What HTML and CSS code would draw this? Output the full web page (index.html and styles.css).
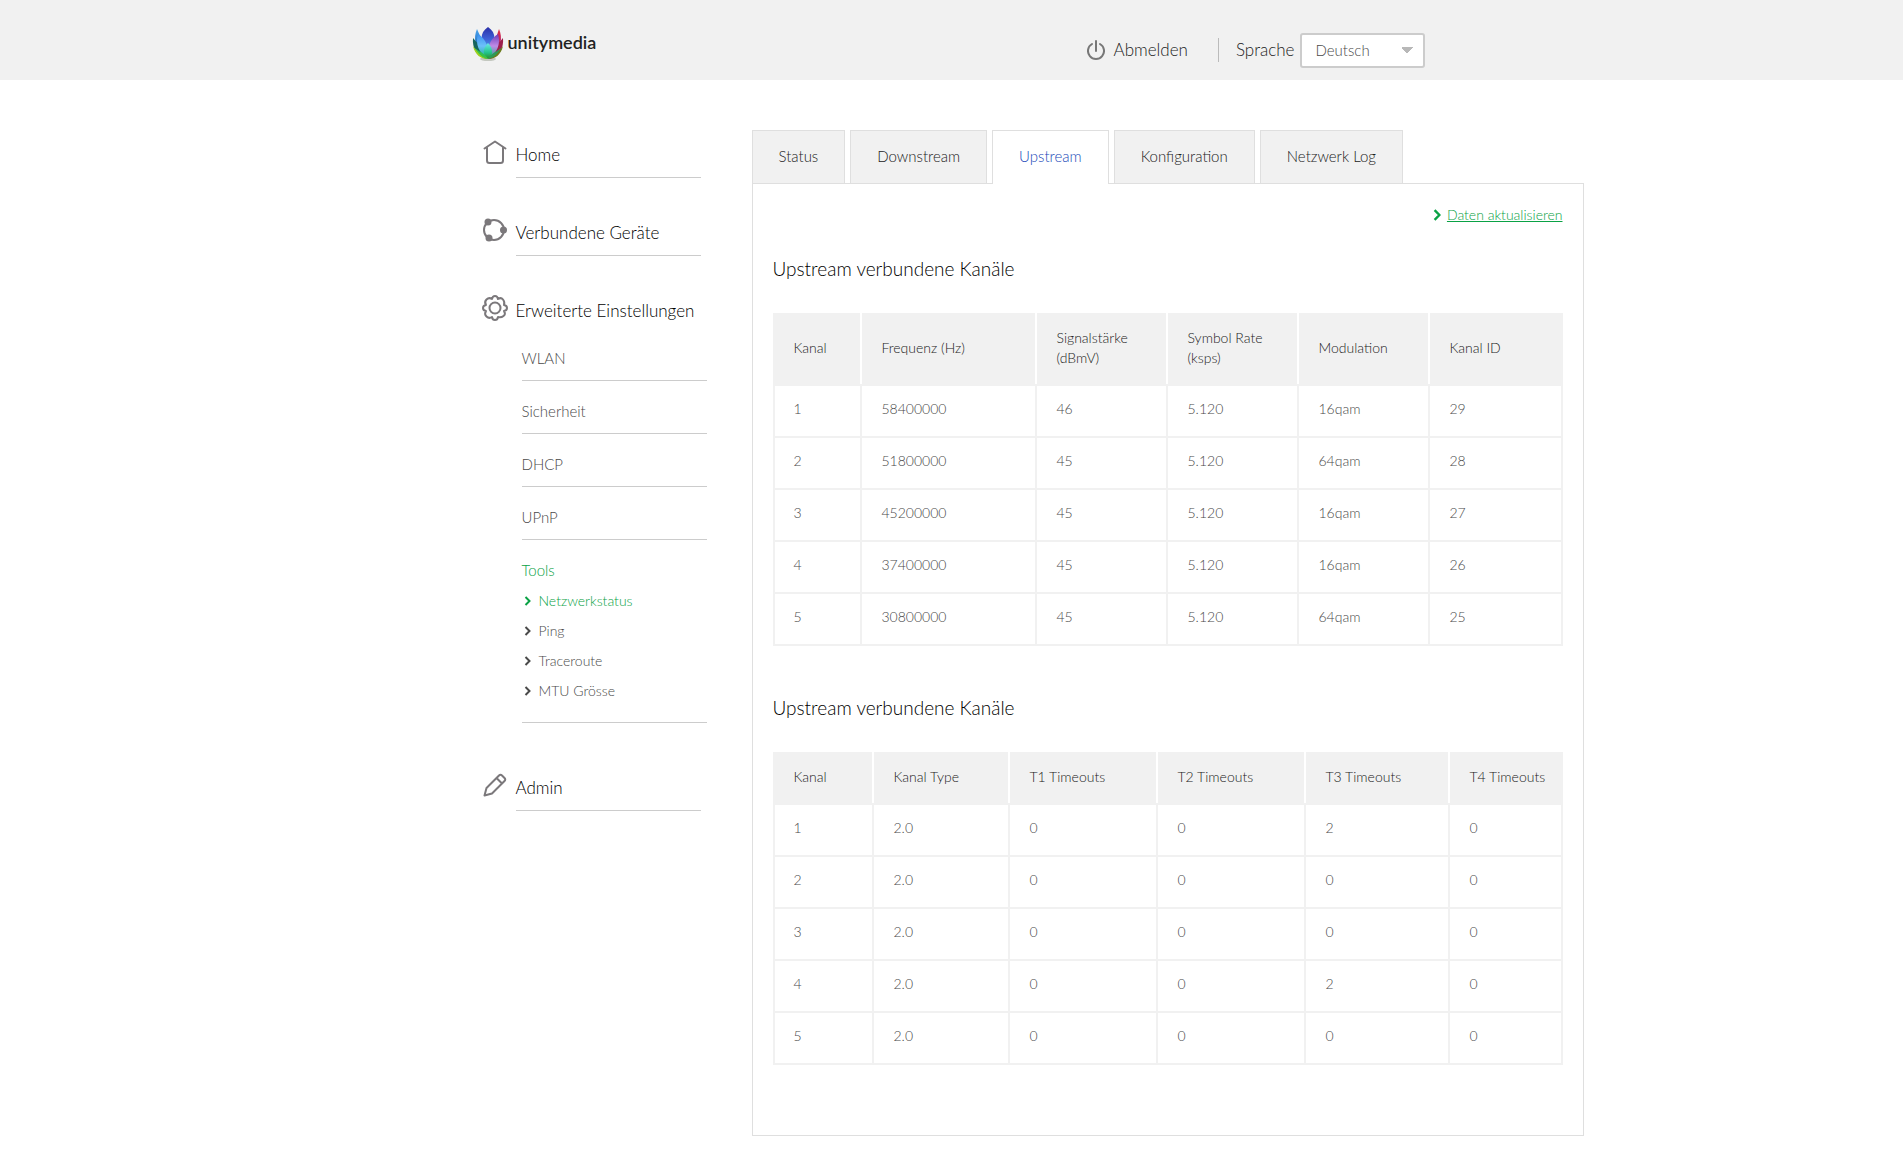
FILE: index.html
```
<!DOCTYPE html>
<html lang="de">
<head>
  <meta charset="UTF-8" />
  <meta name="viewport" content="width=device-width, initial-scale=1.0"/>
  <title>Netzwerkstatus - Upstream</title>
  <link rel="stylesheet" href="styles.css">
</head>
<body>

  <header class="header">
    <div class="container header-inner">
      <a class="logo" href="#">
        <svg class="logo-mark" width="32" height="36" viewBox="0 0 32 36" aria-hidden="true">
          <defs>
            <linearGradient id="petalTop" x1="0" y1="0" x2="0" y2="1">
              <stop offset="0" stop-color="#2a2fa8"/><stop offset=".5" stop-color="#3f62d8"/><stop offset="1" stop-color="#4fc0ee"/>
            </linearGradient>
            <linearGradient id="petalLeft" x1="0" y1="0" x2="0" y2="1">
              <stop offset="0" stop-color="#3b8ff0"/><stop offset=".5" stop-color="#6cc0fa"/><stop offset="1" stop-color="#12b48c"/>
            </linearGradient>
            <linearGradient id="petalRight" x1="0" y1="0" x2="0" y2="1">
              <stop offset="0" stop-color="#6a3ab8"/><stop offset=".5" stop-color="#c08be6"/><stop offset="1" stop-color="#2aa58c"/>
            </linearGradient>
            <linearGradient id="petalBlue" x1="0" y1="0" x2="0" y2="1">
              <stop offset="0" stop-color="#4ba6ee"/><stop offset=".5" stop-color="#2a78c8"/><stop offset="1" stop-color="#176a50"/>
            </linearGradient>
            <linearGradient id="petalRed" x1="0" y1="0" x2="0" y2="1">
              <stop offset="0" stop-color="#e0303c"/><stop offset=".5" stop-color="#b8266e"/><stop offset="1" stop-color="#4a3a3a"/>
            </linearGradient>
            <linearGradient id="petalBase" x1="0" y1="0" x2="0" y2="1">
              <stop offset="0" stop-color="#6fe8ec"/><stop offset=".6" stop-color="#22c48a"/><stop offset="1" stop-color="#2c8a22"/>
            </linearGradient>
          </defs>
          <ellipse cx="16" cy="33" rx="8" ry="2" fill="#c4c8c0"/>
          <path d="M5 3C1 12 3 22 11 29L9 12Z" fill="url(#petalBlue)"/>
          <path d="M27 3C31 12 29 22 21 29L24 12Z" fill="url(#petalRed)"/>
          <path d="M1 12C0 22 5 31 15 33L8 20Z" fill="#17655e"/>
          <path d="M31 12C32 22 27 31 17 33L25 19Z" fill="#9c1f4c"/>
          <path d="M1 20C3 29 9 33 16 33C12 29 6 27 1 20Z" fill="#9ccf1f"/>
          <path d="M31 20C29 29 23 33 16 33C20 29 26 27 31 20Z" fill="#6b7d1c"/>
          <path d="M16 1C7 7 8 16 16 26C24 16 25 7 16 1Z" fill="url(#petalTop)"/>
          <path d="M6 8C3 18 7 27 15 32C18 22 14 13 6 8Z" fill="url(#petalLeft)"/>
          <path d="M26 8C29 18 25 27 17 32C14 22 18 13 26 8Z" fill="url(#petalRight)"/>
          <path d="M16 17C10 23 11 30 16 33C21 30 22 23 16 17Z" fill="url(#petalBase)"/>
          <path d="M3 22C7 29 11 32 16 33C14 28 9 27 3 22Z" fill="#35c24a"/>
          <path d="M29 22C25 29 21 32 16 33C18 28 23 27 29 22Z" fill="#2d9a58"/>
        </svg>
        <span class="logo-text">unitymedia</span>
      </a>

      <div class="header-tools">
        <a class="logout" href="#">
          <svg width="18" height="20" viewBox="0 0 18 20" fill="none" stroke="#777" stroke-width="2" stroke-linecap="round" aria-hidden="true">
            <path d="M5 4A8 8 0 1 0 13 4M9 1V11"/>
          </svg>
          Abmelden
        </a>
        <div class="language">
          <label for="language">Sprache</label>
          <select id="language">
            <option>Deutsch</option>
            <option>English</option>
          </select>
        </div>
      </div>
    </div>
  </header>

  <div class="container layout">
    <nav class="sidebar">
      <ul class="menu">
        <li class="menu-item">
          <svg class="menu-icon" viewBox="0 0 26 26" fill="none" stroke="#7b787b" stroke-width="2" stroke-linecap="round" stroke-linejoin="round" aria-hidden="true">
            <path d="M2.500 9.500L13 2.500L23.500 9.500M5 8.500V21.500Q5 24 7.500 24H18.500Q21 24 21 21.500V8.500"/>
          </svg>
          <a class="menu-link" href="#">Home</a>
        </li>
        <li class="menu-item">
          <svg class="menu-icon" viewBox="0 0 26 26" fill="none" stroke="#7b787b" stroke-width="2" aria-hidden="true">
            <circle cx="12" cy="13" r="10"/>
            <g fill="#7b787b" stroke="none">
              <circle cx="6" cy="5" r="3.500"/><circle cx="21.500" cy="13" r="3.500"/><circle cx="7" cy="21" r="3.500"/>
            </g>
          </svg>
          <a class="menu-link" href="#">Verbundene Geräte</a>
        </li>
        <li class="menu-item menu-item-open">
          <svg class="menu-icon" viewBox="0 0 26 26" fill="none" stroke="#7b787b" stroke-width="2" stroke-linejoin="round" aria-hidden="true">
            <path d="M10 4Q10.500 1 13 1T16 4Q19 2 21 4.500T22 10Q25 10.500 25 13T22 16Q24 19 21.500 21T16 22Q15.500 25 13 25T10 22Q7 24 4.500 21.500T4 16Q1 15.500 1 13T4 10Q2 7 4.500 4.500T10 4Z"/>
            <circle cx="13" cy="13" r="5.500"/>
          </svg>
          <a class="menu-link" href="#">Erweiterte Einstellungen</a>
        </li>
      </ul>

      <ul class="submenu">
        <li><a href="#">WLAN</a></li>
        <li><a href="#">Sicherheit</a></li>
        <li><a href="#">DHCP</a></li>
        <li><a href="#">UPnP</a></li>
        <li class="submenu-open">
          <a class="active" href="#">Tools</a>
          <ul class="tools">
            <li class="active"><svg class="chevron" viewBox="0 0 6 10"><path d="M1 1L5 5L1 9"/></svg><a href="#">Netzwerkstatus</a></li>
            <li><svg class="chevron" viewBox="0 0 6 10"><path d="M1 1L5 5L1 9"/></svg><a href="#">Ping</a></li>
            <li><svg class="chevron" viewBox="0 0 6 10"><path d="M1 1L5 5L1 9"/></svg><a href="#">Traceroute</a></li>
            <li><svg class="chevron" viewBox="0 0 6 10"><path d="M1 1L5 5L1 9"/></svg><a href="#">MTU Grösse</a></li>
          </ul>
        </li>
      </ul>

      <ul class="menu">
        <li class="menu-item">
          <svg class="menu-icon" viewBox="0 0 26 26" fill="none" stroke="#7b787b" stroke-width="2" stroke-linejoin="round" aria-hidden="true">
            <path d="M2.500 23.500L4.500 16L17 3.500Q18.500 2 20 3.500L22.500 6Q24 7.500 22.500 9L10 21.500ZM14.500 6L20 11.500"/>
          </svg>
          <a class="menu-link" href="#">Admin</a>
        </li>
      </ul>
    </nav>

    <main class="content">
      <div class="tabs">
        <a class="tab" href="#">Status</a>
        <a class="tab" href="#">Downstream</a>
        <a class="tab tab-active" href="#">Upstream</a>
        <a class="tab" href="#">Konfiguration</a>
        <a class="tab" href="#">Netzwerk Log</a>
      </div>

      <div class="panel">
        <div class="refresh">
          <svg class="chevron chevron-large" viewBox="0 0 6 10"><path d="M1 1L5 5L1 9"/></svg>
          <a href="#">Daten aktualisieren</a>
        </div>

        <h2>Upstream verbundene Kanäle</h2>
        <table class="channels channels-signal">
          <colgroup><col><col><col><col><col><col></colgroup>
          <thead>
            <tr><th>Kanal</th><th>Frequenz (Hz)</th><th>Signalstärke<br>(dBmV)</th><th>Symbol Rate<br>(ksps)</th><th>Modulation</th><th>Kanal ID</th></tr>
          </thead>
          <tbody>
            <tr><td>1</td><td>58400000</td><td>46</td><td>5.120</td><td>16qam</td><td>29</td></tr>
            <tr><td>2</td><td>51800000</td><td>45</td><td>5.120</td><td>64qam</td><td>28</td></tr>
            <tr><td>3</td><td>45200000</td><td>45</td><td>5.120</td><td>16qam</td><td>27</td></tr>
            <tr><td>4</td><td>37400000</td><td>45</td><td>5.120</td><td>16qam</td><td>26</td></tr>
            <tr><td>5</td><td>30800000</td><td>45</td><td>5.120</td><td>64qam</td><td>25</td></tr>
          </tbody>
        </table>

        <h2>Upstream verbundene Kanäle</h2>
        <table class="channels channels-timeouts">
          <colgroup><col><col><col><col><col><col></colgroup>
          <thead>
            <tr><th>Kanal</th><th>Kanal Type</th><th>T1 Timeouts</th><th>T2 Timeouts</th><th>T3 Timeouts</th><th>T4 Timeouts</th></tr>
          </thead>
          <tbody>
            <tr><td>1</td><td>2.0</td><td>0</td><td>0</td><td>2</td><td>0</td></tr>
            <tr><td>2</td><td>2.0</td><td>0</td><td>0</td><td>0</td><td>0</td></tr>
            <tr><td>3</td><td>2.0</td><td>0</td><td>0</td><td>0</td><td>0</td></tr>
            <tr><td>4</td><td>2.0</td><td>0</td><td>0</td><td>2</td><td>0</td></tr>
            <tr><td>5</td><td>2.0</td><td>0</td><td>0</td><td>0</td><td>0</td></tr>
          </tbody>
        </table>
      </div>
    </main>
  </div>

</body>
</html>
```
FILE: styles.css
```
:root {
  --grey-bg: #f1f1f1;
  --line: #ccc;
  --panel-line: #dfdfdf;
  --text: #000;
  --text-soft: #4a4a4a;
  --green: #0aa245;
}

* {
  box-sizing: border-box;
}

body {
  margin: 0;
  font-family: Lato, "Open Sans", sans-serif;
  font-weight: 300;
  font-size: 15px;
  line-height: 20px;
  color: var(--text);
  background: #fff;
}

a {
  color: inherit;
  text-decoration: none;
}

ul {
  list-style: none;
  margin: 0;
  padding: 0;
}

.container {
  max-width: 960px;
  margin: 0 auto;
}

/* header */
.header {
  background: var(--grey-bg);
}

.header-inner {
  display: flex;
  justify-content: space-between;
  align-items: center;
  height: 80px;
  padding-right: 7px;
}

.logo {
  display: flex;
  align-items: center;
  gap: 4px;
  padding-top: 8px;
}

.logo-text {
  padding-bottom: 4px;
  font-size: 18px;
  font-weight: 600;
  color: #222;
}

.header-tools {
  display: flex;
  align-items: center;
  padding-top: 20px;
  font-size: 17px;
  line-height: 24px;
  color: #222;
}

.logout {
  display: flex;
  align-items: center;
  gap: 9px;
  padding-right: 30px;
  border-right: 1px solid #bbb;
}

.language {
  display: flex;
  align-items: center;
  gap: 5px;
  padding-left: 17px;
}

.language select {
  appearance: none;
  width: 125px;
  height: 35px;
  padding: 0 14px;
  border: 2px solid #ccc;
  border-radius: 3px;
  font: inherit;
  font-size: 15px;
  color: var(--text-soft);
  background: conic-gradient(from 315deg at 50% 100%, #b8b8b8 90deg, #fff 0) right 11px center / 12px 6px no-repeat #fff;
  background: conic-gradient(from 315deg at 50% 100%, #b8b8b8 90deg, #fff 0) right 10px center / 12px 6px no-repeat #fff;
}

/* page layout */
.layout {
  display: grid;
  grid-template-columns: 280px 832px;
  padding: 50px 0 30px;
}

/* sidebar */
.sidebar {
  padding: 8px 0 0 10px;
}

.menu-item {
  display: flex;
  gap: 8px;
  margin-bottom: 38px;
}

.menu-icon {
  flex: none;
  width: 26px;
  height: 26px;
  margin-top: 1px;
}

.menu-link {
  width: 185px;
  padding: 5px 0 10px;
  border-bottom: 1px solid var(--line);
  font-size: 17px;
  line-height: 24px;
  white-space: nowrap;
}

.menu-item-open {
  margin-bottom: 0;
}

.menu-item-open .menu-link {
  padding-bottom: 5px;
  border: none;
}

.submenu {
  width: 185px;
  margin: 0 0 48px 40px;
}

.submenu > li {
  padding: 14px 0 6px;
  border-bottom: 1px solid var(--line);
  line-height: 32px;
  color: var(--text-soft);
}

.submenu > .submenu-open {
  padding-bottom: 16px;
}

.tools li {
  display: flex;
  align-items: center;
  gap: 8px;
  padding-left: 2px;
  font-size: 14px;
  line-height: 30px;
}

.submenu .active {
  color: var(--green);
}

.chevron {
  width: 7px;
  height: 10px;
  fill: none;
  stroke: currentColor;
  stroke-width: 2;
}

.chevron-large {
  width: 8px;
  height: 12px;
}

/* tabs */
.tabs {
  display: flex;
  gap: 5px;
}

.tab {
  padding: 15px 26px 17px;
  border: 1px solid var(--panel-line);
  border-bottom: none;
  color: #222;
  background: var(--grey-bg);
}

.tab-active {
  margin-bottom: -1px;
  padding-bottom: 18px;
  color: #2149b8;
  background: #fff;
  z-index: 1;
}

/* panel */
.panel {
  padding: 20px 20px 22px;
  border: 1px solid var(--panel-line);
}

.refresh {
  display: flex;
  justify-content: flex-end;
  align-items: center;
  gap: 6px;
  font-size: 14px;
  line-height: 22px;
  color: var(--green);
}

.refresh a {
  text-decoration: underline;
}

h2 {
  margin: 29px 0 30px;
  font-size: 19px;
  line-height: 28px;
  font-weight: 300;
}

.channels {
  width: 100%;
  table-layout: fixed;
  border-collapse: collapse;
  margin-bottom: 48px;
  font-size: 14px;
}

.channels th,
.channels td {
  padding: 13px 0 17px 20px;
  border: 2px solid var(--grey-bg);
  text-align: left;
  font-weight: 300;
  white-space: nowrap;
}

.channels td {
  color: var(--text-soft);
}

.channels th {
  padding-bottom: 16px;
  background: var(--grey-bg);
  color: #222;
  border-left-color: #fff;
  border-right-color: #fff;
}

.channels th:first-child,
.channels td:first-child {
  padding-left: 19px;
}

.channels th:first-child {
  border-left-color: var(--grey-bg);
}

.channels th:last-child {
  border-right-color: var(--grey-bg);
}

/* column widths, the last one takes the rest */
.channels-signal col { width: 131px; }
.channels-signal col:nth-child(1) { width: 87px; }
.channels-signal col:nth-child(2) { width: 175px; }

.channels-timeouts col { width: 148px; }
.channels-timeouts col:nth-child(1) { width: 99px; }
.channels-timeouts col:nth-child(2) { width: 136px; }
.channels-timeouts col:nth-child(5) { width: 144px; }

.channels col:last-child { width: auto; }
```
